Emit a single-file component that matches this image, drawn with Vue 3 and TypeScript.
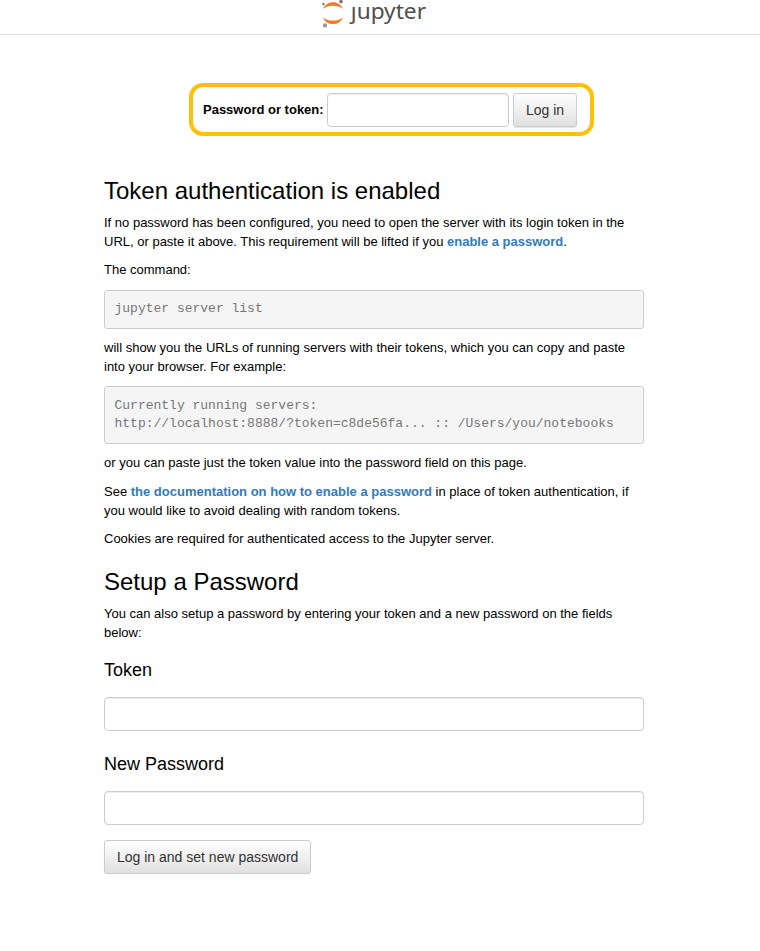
<script setup lang="ts">
import { ref } from 'vue'

const loginToken = ref('')
const setupToken = ref('')
const newPassword = ref('')
const runningServers: string = 'Currently running servers:\nhttp://localhost:8888/?token=c8de56fa... :: /Users/you/notebooks'
</script>

<template>
  <header class="header">
    <svg class="logo" viewBox="0 0 108 34" role="img" aria-label="jupyter">
      <path d="M2 9C3.800 4.600 7.800 2.300 12 2.300S20.200 4.600 22 9C19.300 6.800 15.900 5.800 12 5.800S4.700 6.800 2 9Z" fill="#f37726" />
      <path d="M2 17.400C4.700 19.600 8.100 20.600 12 20.600s7.300-1 10-3.200C20.200 21.800 16.200 24.100 12 24.100S3.800 21.800 2 17.400Z" fill="#f37726" />
      <circle cx="2.400" cy="4" r="1.200" fill="#767677" />
      <circle cx="20" cy="1.700" r="1.800" fill="#767677" />
      <circle cx="4" cy="25.400" r="2.100" fill="#989798" />
      <text x="29.800" y="19.300" textLength="75.200" lengthAdjust="spacingAndGlyphs" class="wordmark">ȷupyter</text>
    </svg>
  </header>
  <main class="page">
    <form class="login" @submit.prevent>
      <label for="login-token">Password or token:</label>
      <input id="login-token" v-model="loginToken" class="control" type="password" />
      <button class="button" type="submit">Log in</button>
    </form>
    <section class="content">
      <h1>Token authentication is enabled</h1>
      <p class="intro">If no password has been configured, you need to open the server with its login token in the URL, or paste it above. This requirement will be lifted if you <a href="#">enable a password</a>.</p>
      <p class="command-label">The command:</p>
      <pre>jupyter server list</pre>
      <p>will show you the URLs of running servers with their tokens, which you can copy and paste into your browser. For example:</p>
      <pre>{{ runningServers }}</pre>
      <p>or you can paste just the token value into the password field on this page.</p>
      <p>See <a href="#">the documentation on how to enable a password</a> in place of token authentication, if you would like to avoid dealing with random tokens.</p>
      <p>Cookies are required for authenticated access to the Jupyter server.</p>
      <h1 class="setup-title">Setup a Password</h1>
      <p>You can also setup a password by entering your token and a new password on the fields below:</p>
      <form class="setup" @submit.prevent>
        <label for="setup-token">Token</label>
        <input id="setup-token" v-model="setupToken" class="control" type="password" />
        <label for="new-password">New Password</label>
        <input id="new-password" v-model="newPassword" class="control" type="password" />
        <button class="button" type="submit">Log in and set new password</button>
      </form>
    </section>
  </main>
</template>

<style>
body { background: #fff; }
</style>

<style scoped>
* { box-sizing: border-box; }
.header {
  height: 35px;
  border-bottom: 1px solid #e7e7e7;
  display: flex;
  padding-left: 321px;
}
.logo { width: 108px; height: 34px; flex: none; }
.wordmark { font: 22.500px/1 "Noto Sans", sans-serif; fill: #4e4e4e; }
.page {
  font: 13px/19px "Liberation Sans", Arial, sans-serif;
  color: #000;
  padding: 48px 0 0 104px;
}
.login {
  width: 405px;
  height: 53px;
  margin-left: 85.400px;
  padding: 6px 0 0 9.600px;
  border: 4px solid #ffc107;
  border-radius: 14px;
  display: flex;
  align-items: flex-start;
  gap: 4px;
}
.login label { font-weight: 700; width: 120px; padding-top: 7px; white-space: nowrap; }
.login .control { width: 182px; }
.control {
  display: block;
  height: 34px;
  padding: 6px 12px;
  border: 1px solid #ccc;
  border-radius: 4px;
  background: #fff;
  box-shadow: inset 0 1px 1px rgba(0, 0, 0, .075);
  outline: none;
  font: 14px "Liberation Sans", Arial, sans-serif;
}
.button {
  height: 34px;
  padding: 0 12px;
  border: 1px solid #ccc;
  border-radius: 3px;
  background: linear-gradient(#fff, #e0e0e0);
  box-shadow: 0 1px 1px rgba(0, 0, 0, .12);
  color: #333;
  font: 14px/20px "Liberation Sans", Arial, sans-serif;
  white-space: nowrap;
}
.content { width: 540px; padding-top: 41px; }
h1 { margin: 0 0 9px; font-size: 24px; line-height: 27px; font-weight: 400; }
h1.setup-title { margin-top: 20px; }
p { margin: 0 0 9.500px; }
p.intro { margin-bottom: 9px; }
p.command-label { margin-bottom: 11px; }
a { color: #337ab7; font-weight: 700; text-decoration: none; }
pre {
  margin: 10px 0 9.100px;
  padding: 9.300px 9.500px;
  border: 1px solid #ccc;
  border-radius: 3px;
  background: #f5f5f5;
  color: #777;
  font: 13px/18.570px "Liberation Mono", monospace;
}
.setup label { display: block; font-size: 18px; line-height: 20px; margin: 18px 0 17px; }
.setup .control { width: 100%; }
.setup .control + label { margin-top: 23px; }
.setup .button { margin-top: 15px; }
</style>
